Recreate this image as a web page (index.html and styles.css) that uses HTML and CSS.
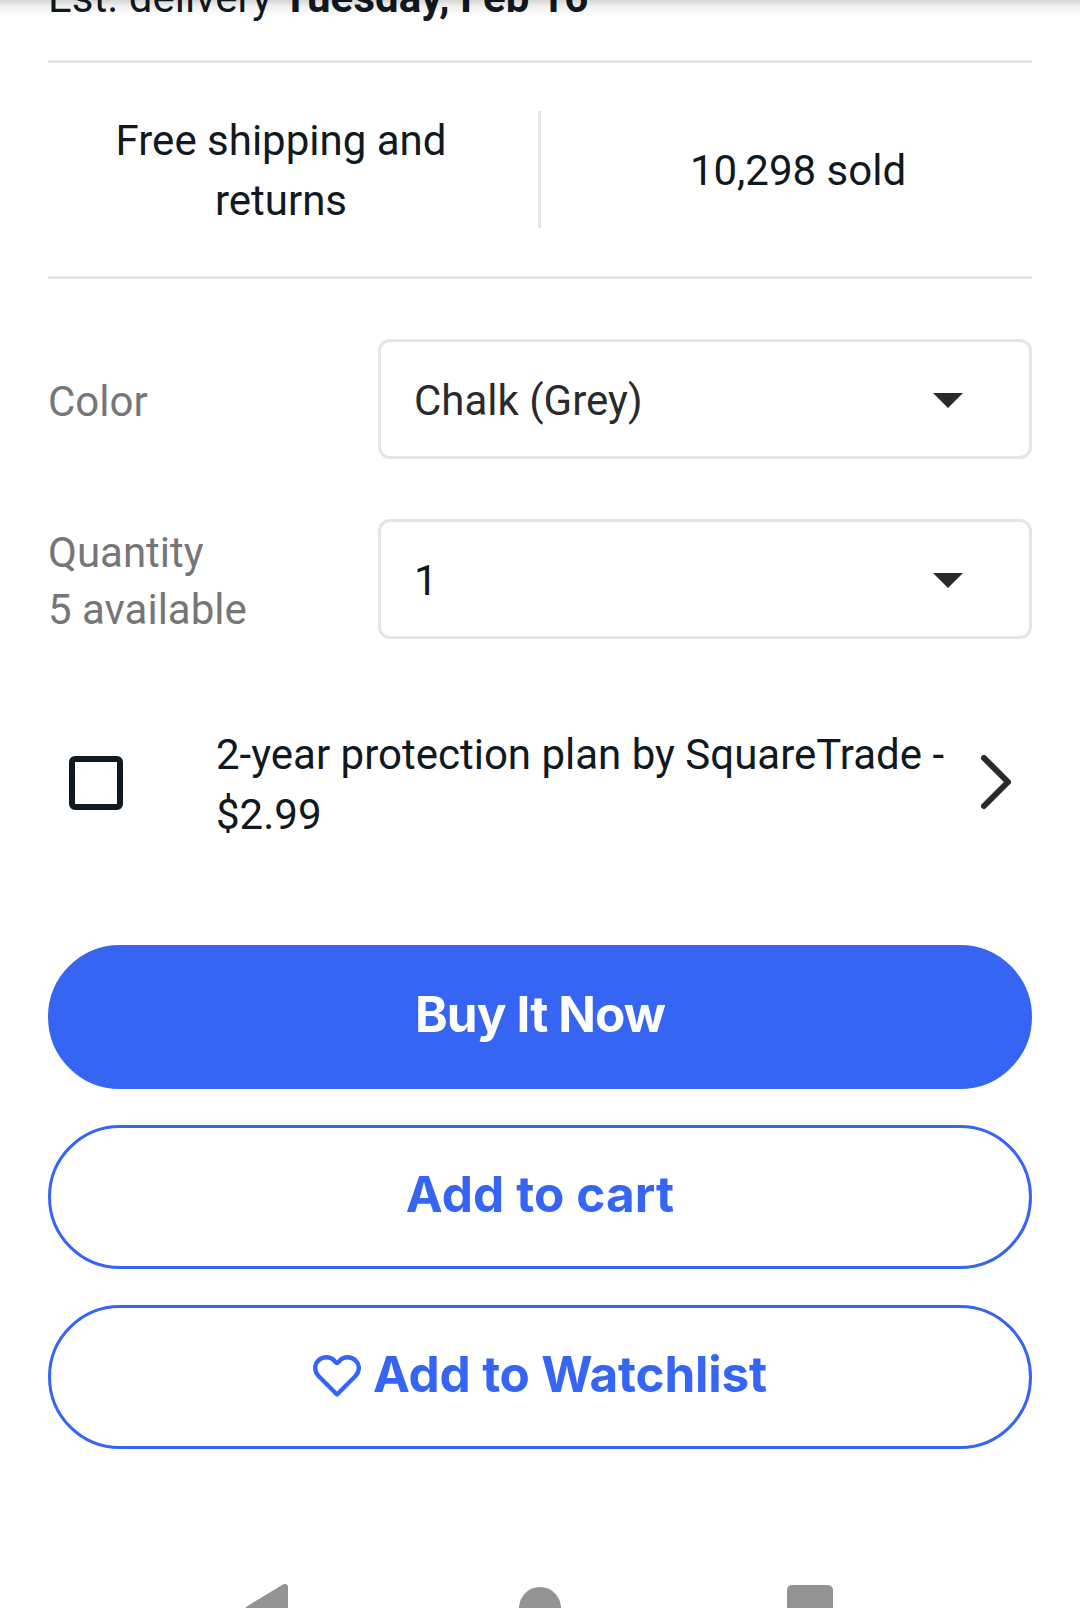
FILE: index.html
```
<!DOCTYPE html>
<html lang="en">
<head>
<meta charset="utf-8">
<meta name="viewport" content="width=device-width, initial-scale=1">
<title>Item purchase options</title>
<link rel="stylesheet" href="styles.css">
</head>
<body>
<main class="screen">
  <div class="scroll-shadow"></div>
  <p class="delivery"><span class="delivery-label">Est. delivery </span><strong class="delivery-date">Tuesday, Feb 16</strong></p>
  <section class="signals">
    <p class="signal">Free shipping and<br>returns</p>
    <div class="divider"></div>
    <p class="signal">10,298 sold</p>
  </section>
  <section class="options">
    <div class="option">
      <div class="option-label">Color</div>
      <div class="select"><span class="select-value">Chalk (Grey)</span>
        <svg class="caret" viewBox="0 0 30 15"><path d="M0 0H30L15 15Z"/></svg></div>
    </div>
    <div class="option">
      <div class="option-label quantity">Quantity<br>5 available</div>
      <div class="select"><span class="select-value dark">1</span>
        <svg class="caret" viewBox="0 0 30 15"><path d="M0 0H30L15 15Z"/></svg></div>
    </div>
  </section>
  <section class="plan">
    <span class="checkbox"></span>
    <p class="plan-text">2-year protection plan by SquareTrade -<br>$2.99</p>
    <svg class="chevron" viewBox="0 0 30 54"><path d="M3 3L27 27L3 51"/></svg>
  </section>
  <section class="actions">
    <button class="btn primary"><span class="btn-text buy">Buy It Now</span></button>
    <button class="btn"><span class="btn-text cart">Add to cart</span></button>
    <button class="btn"><svg class="heart" viewBox="0 0 48 42"><path d="M24 39.500L5.500 21C1 16 1 9.500 5.500 5.300C10 1.200 17 1.200 21 5.300L22.500 7.200Q24 9 25.500 7.200L27 5.300C31 1.200 38 1.200 42.500 5.300C47 9.500 47 16 42.500 21Z"/></svg><span class="btn-text watch">Add to Watchlist</span></button>
  </section>
  <nav class="system-nav">
    <svg class="nav-icon back" viewBox="0 0 42 24"><path d="M0 24C0 23 .5 22.500 1.500 22L37 .5C40 -1 42 .5 42 3V24Z"/></svg>
    <svg class="nav-icon home" viewBox="0 0 42 21"><circle cx="21" cy="21" r="21"/></svg>
    <svg class="nav-icon recent" viewBox="0 0 46 23"><rect width="46" height="46" rx="5"/></svg>
  </nav>
</main>
</body>
</html>
```
FILE: styles.css
```
* { box-sizing: border-box; }
body { margin: 0; background: #fff; }
p { margin: 0; }
svg { display: block; flex: none; }

.screen {
  position: relative;
  width: 1080px;
  height: 1608px;
  overflow: hidden;
  padding: 0 48px;
  display: flex;
  flex-direction: column;
  font: 400 42px/60px Roboto, sans-serif;
  color: #111820;
}
.scroll-shadow {
  position: absolute;
  inset: 0 0 auto;
  height: 18px;
  background: linear-gradient(rgba(0, 0, 0, .17), rgba(0, 0, 0, .06) 35%, rgba(0, 0, 0, .02) 70%, transparent);
}
.delivery {
  height: 95px;
  flex: none;
  margin-top: -32px;
  border-bottom: 3px solid #e5e5e5;
  white-space: pre;
}
.delivery-date { font-weight: 700; letter-spacing: .1px; }

.signals {
  height: 216px;
  border-bottom: 3px solid #e5e5e5;
  padding: 48px 0;
  display: grid;
  grid-template-columns: 466px 3px 466px;
  column-gap: 24px;
}
.signal { text-align: center; align-self: center; }
.divider { height: 117px; background: #e5e5e5; }

.options { padding-top: 60px; display: grid; gap: 60px; }
.option {
  height: 120px;
  display: grid;
  grid-template-columns: 330px 1fr;
  align-items: center;
}
.option-label { color: #767676; line-height: 57px; padding-top: 4px; }
.select {
  height: 120px;
  border: 3px solid #e5e5e5;
  border-radius: 12px;
  padding: 0 66px 0 33px;
  display: flex;
  align-items: center;
  justify-content: space-between;
  color: #2a2a2a;
}
.select-value { padding-top: 4px; }
.dark { color: #111820; }
.caret { width: 30px; height: 15px; margin-top: 2px; fill: #2a2a2a; }

.plan {
  height: 120px;
  margin: 84px 21px 0;
  display: flex;
  align-items: center;
}
.checkbox { width: 54px; height: 54px; border: 6px solid #111820; border-radius: 6px; }
.plan-text { flex: 1; margin-left: 93px; padding-top: 3px; white-space: nowrap; }
.chevron { width: 30px; height: 54px; margin-bottom: 2px; fill: none; stroke: #2a2a2a; stroke-width: 6; stroke-linecap: round; stroke-linejoin: round; }

.actions { margin-top: 102px; display: grid; gap: 36px; }
.btn {
  height: 144px;
  border: 3px solid #3665f3;
  border-radius: 72px;
  background: #fff;
  color: #3665f3;
  font: 700 49.5px/60px Inter, sans-serif;
  display: flex;
  align-items: center;
  justify-content: center;
  padding: 0;
}
.btn-text { padding-bottom: 6px; }
.primary { background: #3665f3; color: #fff; }
.buy { letter-spacing: -.9px; }
.cart { letter-spacing: .1px; }
.watch { letter-spacing: -.2px; }
.heart { width: 48px; height: 42px; margin: 0 12px 2px 0; fill: none; stroke: #3665f3; stroke-width: 4.4; stroke-linejoin: round; }

.system-nav {
  height: 24px;
  margin: auto -48px 0;
  padding: 0 247px 0 246px;
  display: grid;
  grid-template-columns: 42px 42px 46px;
  column-gap: 231px;
  align-items: end;
  fill: #939393;
}
.back { width: 42px; height: 24px; }
.home { width: 42px; height: 21px; }
.recent { width: 46px; height: 23px; margin-left: -5px; }
```
